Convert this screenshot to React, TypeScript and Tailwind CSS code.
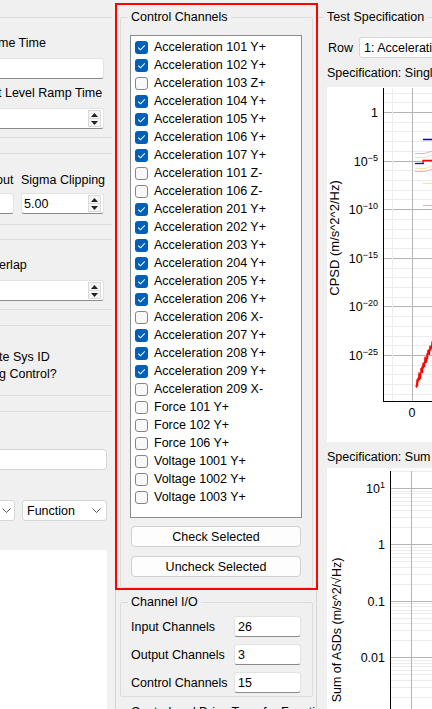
import React from 'react';

const channels: [string, boolean][] = [
  ['Acceleration 101 Y+', true],
  ['Acceleration 102 Y+', true],
  ['Acceleration 103 Z+', false],
  ['Acceleration 104 Y+', true],
  ['Acceleration 105 Y+', true],
  ['Acceleration 106 Y+', true],
  ['Acceleration 107 Y+', true],
  ['Acceleration 101 Z-', false],
  ['Acceleration 106 Z-', false],
  ['Acceleration 201 Y+', true],
  ['Acceleration 202 Y+', true],
  ['Acceleration 203 Y+', true],
  ['Acceleration 204 Y+', true],
  ['Acceleration 205 Y+', true],
  ['Acceleration 206 Y+', true],
  ['Acceleration 206 X-', false],
  ['Acceleration 207 Y+', true],
  ['Acceleration 208 Y+', true],
  ['Acceleration 209 Y+', true],
  ['Acceleration 209 X-', false],
  ['Force 101 Y+', false],
  ['Force 102 Y+', false],
  ['Force 106 Y+', false],
  ['Voltage 1001 Y+', false],
  ['Voltage 1002 Y+', false],
  ['Voltage 1003 Y+', false],
];

const plotFont = 'Liberation Sans, Arial, sans-serif';

function CheckBox({ checked }: { checked: boolean }) {
  if (checked) {
    return (
      <span className="w-[13px] h-[13px] shrink-0 rounded-[3px] bg-[#005fb8] flex items-center justify-center">
        <svg width="9" height="7" viewBox="0 0 9 7">
          <path d="M1.2 3.6 L3.5 5.8 L7.8 1.3" stroke="#ffffff" strokeWidth="1.1" fill="none" />
        </svg>
      </span>
    );
  }
  return <span className="w-[13px] h-[13px] shrink-0 rounded-[3px] border border-[#868686] bg-[#f8f8f8]" />;
}

function SpinArrows() {
  return (
    <div className="ml-auto mr-[2px] w-[13px] h-[17px] flex flex-col border border-[#dadada] bg-[#f4f4f4]">
      <div className="flex-1 flex items-center justify-center border-b border-[#dadada]">
        <svg width="7" height="4" viewBox="0 0 7 4">
          <path d="M0 4 L3.5 0 L7 4 Z" fill="#222" />
        </svg>
      </div>
      <div className="flex-1 flex items-center justify-center">
        <svg width="7" height="4" viewBox="0 0 7 4">
          <path d="M0 0 L3.5 4 L7 0 Z" fill="#222" />
        </svg>
      </div>
    </div>
  );
}

function Chevron() {
  return (
    <svg width="9" height="5" viewBox="0 0 9 5" className="shrink-0">
      <path d="M0.5 0.5 L4.5 4.5 L8.5 0.5" stroke="#555" strokeWidth="1" fill="none" />
    </svg>
  );
}

function CpsdPlot() {
  const grid = [];
  for (let k = -2; k <= 29; k++) {
    const y = Math.round(25 + k * 9.72) + 0.5;
    if (y < 1 || y > 313) continue;
    const major = (k + 10) % 5 === 0;
    grid.push(
      <line key={k} x1={56} x2={220} y1={y} y2={y} stroke={major ? '#b4b4b4' : '#ececec'} />
    );
  }
  const ticks = [
    { y: 25, base: '1', exp: '' },
    { y: 74, base: '10', exp: '−5' },
    { y: 122, base: '10', exp: '−10' },
    { y: 171, base: '10', exp: '−15' },
    { y: 219, base: '10', exp: '−20' },
    { y: 268, base: '10', exp: '−25' },
  ];
  // noisy trace climbing from the lower left
  const noise = [0, 4, -3, 5, -2, 3, -5, 4, -1, 6, -4, 2, -3, 5, -4, 3, -2, 4, -5, 3, -1, 5, -3, 4, -4, 2, -2, 5, -3, 3, 0, 4, -2];
  const trace = noise
    .map((n, i) => `${i === 0 ? 'M' : 'L'}${89 + i * 0.5} ${298 - i * 1.3 + n}`)
    .join(' ');

  return (
    <svg width="220" height="355" className="block">
      <rect width="220" height="355" fill="#ffffff" />
      {grid}
      <line x1={65.5} x2={65.5} y1={1} y2={314} stroke="#ececec" />
      <line x1={85.5} x2={85.5} y1={1} y2={314} stroke="#b4b4b4" />
      {/* reference and measured spectra */}
      <path d="M88 66.5 H98 L102 65 L110 63" stroke="#f2b0b0" fill="none" />
      <path d="M88 70.5 H98 L102 69 L110 68" stroke="#f5e4a8" fill="none" />
      <path d="M88 81.5 H98 L102 80 L110 79" stroke="#f5e4a8" fill="none" />
      <path d="M88 84.5 H98 L102 83 L110 82" stroke="#f2b0b0" fill="none" />
      <path d="M96 96.5 H220" stroke="#f5e4a8" fill="none" />
      <path d="M96 118.5 H220" stroke="#f2b0b0" fill="none" />
      <path d="M88 76.5 H97" stroke="#0000ff" strokeWidth="1.3" fill="none" />
      <path d="M96 52.5 H220" stroke="#0000ff" strokeWidth="1.3" fill="none" />
      <path d="M96 76 V73.5 H220" stroke="#ff0000" strokeWidth="1.3" fill="none" />
      <path d={trace} stroke="#ff0000" strokeWidth="1.3" fill="none" />
      <line x1={56.5} x2={56.5} y1={1} y2={315} stroke="#000" />
      <line x1={56} x2={220} y1={314.5} y2={314.5} stroke="#000" />
      {ticks.map((t) => (
        <text key={t.y} x={51} y={t.y + 4.5} textAnchor="end" fontSize="12.5" fontFamily={plotFont} fill="#000">
          {t.base}
          {t.exp && (
            <tspan dy={-5} fontSize="9">
              {t.exp}
            </tspan>
          )}
        </text>
      ))}
      <text x={85} y={330} textAnchor="middle" fontSize="12.5" fontFamily={plotFont} fill="#000">
        0
      </text>
      <text
        x={9}
        y={151}
        transform="rotate(-90 9 151)"
        textAnchor="middle"
        dominantBaseline="middle"
        fontSize="13"
        fontFamily={plotFont}
        fill="#000"
      >
        CPSD (m/s^2^2/Hz)
      </text>
    </svg>
  );
}

function SumPlot() {
  const dec = 56.4;
  const grid = [];
  for (let i = -1; i <= 4; i++) {
    const top = 20 + i * dec;
    const bottom = top + dec;
    if (top >= 1) {
      grid.push(<line key={`M${i}`} x1={63} x2={220} y1={Math.round(top) + 0.5} y2={Math.round(top) + 0.5} stroke="#b4b4b4" />);
    }
    for (let m = 2; m <= 9; m++) {
      const y = Math.round(bottom - Math.log10(m) * dec) + 0.5;
      if (y < 1 || y > 260) continue;
      grid.push(<line key={`m${i}-${m}`} x1={63} x2={220} y1={y} y2={y} stroke="#ececec" />);
    }
  }
  const ticks = [
    { y: 20, base: '10', exp: '1' },
    { y: 76, base: '1', exp: '' },
    { y: 133, base: '0.1', exp: '' },
    { y: 189, base: '0.01', exp: '' },
  ];
  return (
    <svg width="220" height="260" className="block">
      <rect width="220" height="260" fill="#ffffff" />
      {grid}
      <line x1={84.5} x2={84.5} y1={3} y2={260} stroke="#b4b4b4" />
      <line x1={63.5} x2={63.5} y1={3} y2={260} stroke="#000" />
      {ticks.map((t) => (
        <text key={t.y} x={58} y={t.y + 4.5} textAnchor="end" fontSize="12.5" fontFamily={plotFont} fill="#000">
          {t.base}
          {t.exp && (
            <tspan dy={-5} fontSize="9">
              {t.exp}
            </tspan>
          )}
        </text>
      ))}
      <text
        x={11}
        y={162}
        transform="rotate(-90 11 162)"
        textAnchor="middle"
        dominantBaseline="middle"
        fontSize="12.5"
        fontFamily={plotFont}
        fill="#000"
      >
        Sum of ASDs (m/s^2/√Hz)
      </text>
    </svg>
  );
}

export default function App() {
  return (
    <div className="w-[432px] h-[709px] overflow-hidden bg-[#f0f0f0] flex font-['Liberation_Sans',Arial,sans-serif] text-[12.5px] leading-[16px] text-black">
      {/* Left settings panel (scrolled) */}
      <div className="w-[115px] shrink-0 flex flex-col">
        <div className="mt-[17px] w-[112px] h-[121px] border-y border-[#dcdcdc] pt-[17px]">
          <div className="-ml-[2px] whitespace-nowrap">me Time</div>
          <div className="mt-[7px] -ml-[4px] w-[108px] h-[21px] bg-white border border-[#e2e2e2] border-b-[#8a8a8a] rounded-[3px] flex items-center">
            <span className="-ml-[4px]">0</span>
          </div>
          <div className="mt-[6px] -ml-[2px] whitespace-nowrap">t Level Ramp Time</div>
          <div className="mt-[7px] -ml-[4px] w-[108px] h-[21px] bg-white border border-[#e2e2e2] border-b-[#8a8a8a] rounded-[3px] flex items-center">
            <span className="-ml-[4px]">0</span>
            <SpinArrows />
          </div>
        </div>

        <div className="mt-[15px] w-[112px] h-[72px] border-y border-[#dcdcdc] pt-[18px]">
          <div className="flex whitespace-nowrap">
            <span className="w-[21px] -ml-[4px]">out</span>
            <span className="ml-[4px]">Sigma Clipping</span>
          </div>
          <div className="mt-[5px] flex">
            <div className="w-[14px] h-[21px] bg-white border-y border-r border-[#e2e2e2] border-b-[#8a8a8a] rounded-r-[3px]" />
            <div className="ml-[7px] w-[83px] h-[21px] bg-white border border-[#e2e2e2] border-b-[#8a8a8a] rounded-[3px] flex items-center pl-[2px]">
              <span>5.00</span>
              <SpinArrows />
            </div>
          </div>
        </div>

        <div className="mt-[14px] w-[112px] h-[71px] border-y border-[#dcdcdc] pt-[17px]">
          <div className="-ml-[1px] whitespace-nowrap">erlap</div>
          <div className="mt-[7px] -ml-[4px] w-[108px] h-[21px] bg-white border border-[#e2e2e2] border-b-[#8a8a8a] rounded-[3px] flex items-center">
            <SpinArrows />
          </div>
        </div>

        <div className="mt-[15px] w-[112px] h-[71px] border-y border-[#dcdcdc] pt-[23px] leading-[17px]">
          <div className="-ml-[1px] whitespace-nowrap">te Sys ID</div>
          <div className="-ml-[1px] whitespace-nowrap">g Control?</div>
        </div>

        <div className="mt-[15px] w-[112px] flex-1 border-t border-[#dcdcdc] flex flex-col">
          <div className="mt-[37px] -ml-[4px] w-[111px] h-[21px] bg-white border border-[#d6d6d6] rounded-[4px]" />
          <div className="mt-[30px] flex">
            <div className="-ml-[4px] w-[19px] h-[21px] bg-white border border-[#d6d6d6] rounded-[3px] flex items-center justify-end pr-[3px]">
              <Chevron />
            </div>
            <div className="ml-[7px] w-[85px] h-[21px] bg-white border border-[#d6d6d6] rounded-[3px] flex items-center pl-[4px] pr-[5px]">
              <span>Function</span>
              <span className="ml-auto flex">
                <Chevron />
              </span>
            </div>
          </div>
          <div className="mt-[29px] w-[107px] flex-1 bg-white" />
        </div>
      </div>

      {/* Channel selection */}
      <div className="w-[203px] shrink-0 flex flex-col">
        <div className="mt-[3px] w-[203px] h-[591px] border-2 border-[#ff0000] flex flex-col">
          <fieldset className="mt-[4px] ml-[3px] w-[193px] border border-[#dcdcdc] rounded-[2px] pb-[10px]">
            <legend className="ml-[7px] px-[3px]">Control Channels</legend>
            <div className="mt-[10px] ml-[9px] w-[172px] h-[483px] bg-white border border-[#8c8c8c] pt-[2px]">
              {channels.map(([name, on]) => (
                <div key={name} className="h-[18px] flex items-center pl-[4px] gap-[6px] whitespace-nowrap">
                  <CheckBox checked={on} />
                  <span>{name}</span>
                </div>
              ))}
            </div>
            <button className="mt-[8px] ml-[10px] w-[170px] h-[21px] bg-[#fdfdfd] border border-[#d0d0d0] rounded-[4px] flex items-center justify-center">
              Check Selected
            </button>
            <button className="mt-[9px] ml-[10px] w-[170px] h-[21px] bg-[#fdfdfd] border border-[#d0d0d0] rounded-[4px] flex items-center justify-center">
              Uncheck Selected
            </button>
          </fieldset>
        </div>

        <div className="w-[202px] flex-1 border-x border-[#d6d6d6]">
          <fieldset className="mt-[4px] ml-[4px] w-[193px] border border-[#dcdcdc] rounded-[2px] pb-[3px]">
            <legend className="ml-[7px] px-[3px]">Channel I/O</legend>
            {[
              ['Input Channels', '26'],
              ['Output Channels', '3'],
              ['Control Channels', '15'],
            ].map(([label, value], i) => (
              <div key={label} className={`flex items-center ${i === 0 ? 'mt-[6px]' : 'mt-[7px]'}`}>
                <span className="ml-[10px] w-[103px] whitespace-nowrap">{label}</span>
                <div className="w-[67px] h-[21px] bg-white border border-[#e2e2e2] border-b-[#8a8a8a] rounded-[3px] flex items-center pl-[3px]">
                  {value}
                </div>
              </div>
            ))}
          </fieldset>
          <fieldset className="mt-[7px] ml-[4px] w-[193px] h-[40px] border border-[#dcdcdc] rounded-[2px]">
            <legend className="ml-[7px] px-[3px] whitespace-nowrap">Control and Drive Transfer Functions</legend>
          </fieldset>
        </div>
      </div>

      {/* Test specification plots */}
      <div className="w-[300px] shrink-0 flex flex-col">
        <fieldset className="mt-[9px] w-[300px] border-t border-[#dcdcdc]">
          <legend className="ml-[6px] px-[3px]">Test Specification</legend>
          <div className="mt-[12px] ml-[10px] flex items-center">
            <span className="w-[31px]">Row</span>
            <div className="w-[200px] h-[21px] bg-white border border-[#d6d6d6] rounded-[3px] flex items-center pl-[4px] whitespace-nowrap">
              1: Acceleration 101 Y+
            </div>
          </div>
          <div className="mt-[7px] ml-[9px] whitespace-nowrap">Specification: Single Channel CPSD</div>
          <div className="mt-[6px] ml-[9px]">
            <CpsdPlot />
          </div>
          <div className="mt-[7px] ml-[9px] whitespace-nowrap">Specification: Sum of ASDs</div>
          <div className="mt-[3px] ml-[9px]">
            <SumPlot />
          </div>
        </fieldset>
      </div>
    </div>
  );
}
